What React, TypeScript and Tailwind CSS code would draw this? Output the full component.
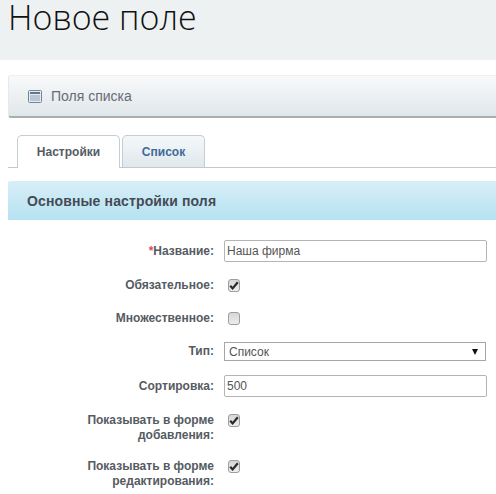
import React from 'react';

const Check = ({ checked }: { checked?: boolean }) => (
  <div className="w-[12px] h-[13px] rounded-[3px] border border-[#9e9e9e] bg-gradient-to-b from-[#d6d6d6] to-[#ededed] flex items-center justify-center">
    {checked && (
      <svg width="10" height="9" viewBox="0 0 10 9">
        <path d="M1.2 4.8 L3.6 7.4 L8.8 1.2" fill="none" stroke="#2b2b2b" strokeWidth="2.2" />
      </svg>
    )}
  </div>
);

const Label = ({ children }: { children: React.ReactNode }) => (
  <div className="w-[214px] shrink-0 text-right text-[12px] leading-[15px] font-bold text-[#555b63]">{children}</div>
);

const App = () => {
  return (
    <div className="w-[496px] h-[494px] overflow-hidden bg-white font-['Liberation_Sans',Arial,sans-serif]">
      <div className="h-[60px] bg-[#edf1f2] pl-[8px]">
        <h1 className="font-['Open_Sans',sans-serif] font-light text-[34px] leading-[34px] text-[#111]">Новое поле</h1>
      </div>

      <div className="ml-[8px] mt-[15px] h-[43px] rounded-l-[3px] border-l border-l-[#e6e8e9] border-t border-t-[#eceeef] border-b-2 border-b-[#a9aeaf] bg-gradient-to-b from-[#f8f9fa] to-[#e0e7ea] flex items-center pl-[19px] gap-[9px]">
        <svg width="14" height="13" viewBox="0 0 14 13">
          <rect x="0.5" y="0.5" width="13" height="12" rx="1" fill="#e6ebf2" stroke="#76849a" />
          <rect x="2" y="2" width="10" height="2" fill="#64758e" />
          <path d="M2 6h10M2 8h10M2 10h10" stroke="#8ea0b8" />
        </svg>
        <span className="text-[14px] text-[#666c75]">Поля списка</span>
      </div>

      <div className="ml-[8px] mt-[17px] h-[33px] border-b border-[#c3c8c9] flex items-end pl-[9px] gap-[2px]">
        <div className="w-[103px] h-[33px] -mb-[1px] rounded-t-[5px] border border-b-0 border-[#c3cdd2] bg-white flex items-center justify-center text-[12px] font-bold text-[#555b63]">
          Настройки
        </div>
        <div className="w-[83px] h-[32px] rounded-t-[5px] border border-b-0 border-[#c3cdd2] bg-gradient-to-b from-[#f5f8f9] to-[#dfe8ed] flex items-center justify-center text-[12px] font-bold text-[#3f6a99]">
          Список
        </div>
      </div>

      <div className="ml-[8px] mt-[13px] h-[39px] pt-[2px] bg-gradient-to-b from-[#d8eef7] to-[#b5e2f2] flex items-center pl-[19px] text-[14px] tracking-[0.13px] font-bold text-[#444b55] rounded-tl-[2px]">
        Основные настройки поля
      </div>

      <div className="flex flex-col">
        <div className="flex items-center gap-[10px] mt-[20px] h-[22px]">
          <Label>
            <span className="text-[#d9534f]">*</span>Название:
          </Label>
          <input
            defaultValue="Наша фирма"
            className="w-[263px] h-[22px] rounded-[2px] border border-[#b4b4b4] px-[2px] text-[12px] text-[#555] outline-none"
          />
        </div>

        <div className="flex items-center gap-[10px] mt-[17px] h-[12px]">
          <Label>Обязательное:</Label>
          <div className="ml-[4px]"><Check checked /></div>
        </div>

        <div className="flex items-center gap-[10px] mt-[21px] h-[12px]">
          <Label>Множественное:</Label>
          <div className="ml-[4px]"><Check /></div>
        </div>

        <div className="flex items-center gap-[10px] mt-[18px] h-[19px]">
          <Label>Тип:</Label>
          <div className="w-[262px] h-[19px] border border-[#a6a6a6] flex items-center justify-between pl-[4px] pr-[7px] text-[12px] text-[#555]">
            <span>Список</span>
            <span className="w-0 h-0 border-x-[3px] border-x-transparent border-t-[6px] border-t-[#111]" />
          </div>
        </div>

        <div className="flex items-center gap-[10px] mt-[14px] h-[22px]">
          <Label>Сортировка:</Label>
          <input
            defaultValue="500"
            className="w-[263px] h-[22px] rounded-[2px] border border-[#b4b4b4] px-[2px] text-[12px] text-[#555] outline-none"
          />
        </div>

        <div className="flex items-start gap-[10px] mt-[16px]">
          <Label>
            Показывать в форме
            <br />
            добавления:
          </Label>
          <div className="ml-[4px] mt-[1px]"><Check checked /></div>
        </div>

        <div className="flex items-start gap-[10px] mt-[16px]">
          <Label>
            Показывать в форме
            <br />
            редактирования:
          </Label>
          <div className="ml-[4px] mt-[1px]"><Check checked /></div>
        </div>
      </div>
    </div>
  );
};

export default App;
